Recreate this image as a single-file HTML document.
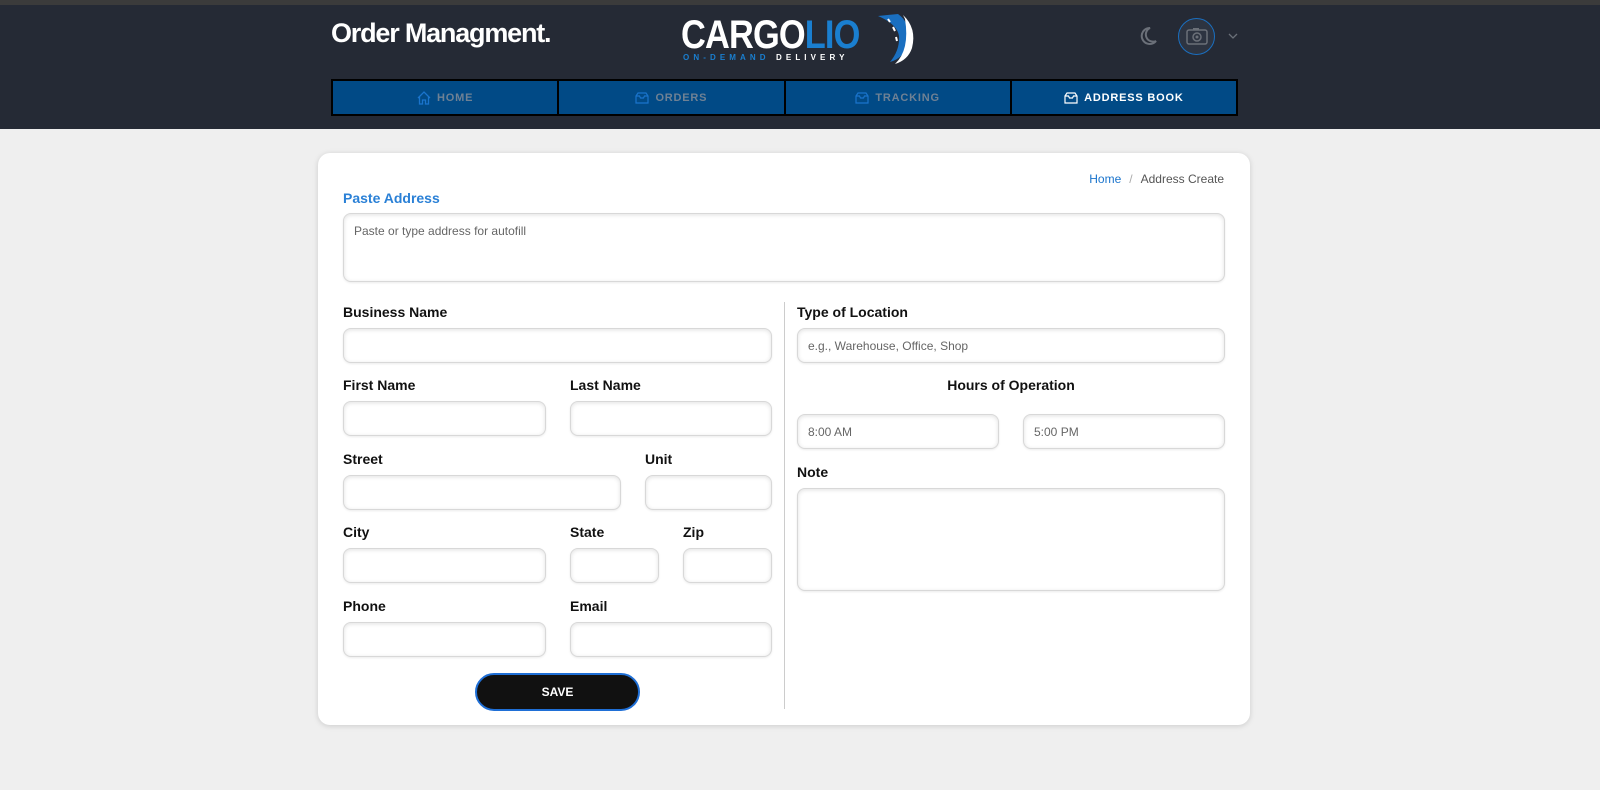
<!DOCTYPE html>
<html><head><meta charset="utf-8"><style>
*{box-sizing:border-box;margin:0;padding:0}
body{width:1600px;height:790px;background:#efefef;font-family:"Liberation Sans",Arial,sans-serif;position:relative;overflow:hidden}
.a{position:absolute}
.top{left:0;top:0;width:1600px;height:5px;background:#3b3b3b}
.hdr{left:0;top:5px;width:1600px;height:124px;background:#252a35}
.title{left:331px;top:18px;color:#fff;font-size:27px;font-weight:bold;letter-spacing:-1.2px}
.nav{left:331px;top:79px;width:907px;height:37px;background:#000;display:flex;gap:2px;padding:2px}
.nav div{flex:1;background:#014a86;color:#6f8194;font-size:11px;font-weight:bold;letter-spacing:.8px;display:flex;align-items:center;justify-content:center;gap:6px}
.nav div.act{color:#fff}
.card{left:318px;top:153px;width:932px;height:572px;background:#fff;border-radius:12px;box-shadow:0 1px 6px rgba(0,0,0,.15)}
.lbl{font-size:14px;font-weight:bold;color:#111}
.in{border:1px solid #d8d8d8;border-radius:8px;background:#fff;box-shadow:inset 0 1px 4px rgba(0,0,0,.12),0 1px 2px rgba(0,0,0,.08);font-size:12px;color:#666;padding:0 10px;display:flex;align-items:center}
</style></head><body>
<div class="a top"></div>
<div class="a hdr"></div>
<div class="a title">Order Managment.</div>
<div class="a" style="left:681px;top:13px;color:#fff;font-size:40px;font-weight:bold;letter-spacing:-1px;line-height:44px;transform:scaleX(0.86);transform-origin:0 0;white-space:nowrap">CARGO<span style="color:#1a7fd0">LIO</span></div>
<div class="a" style="left:683px;top:53px;font-size:8px;font-weight:bold;letter-spacing:4.1px;color:#1a7fd0;white-space:nowrap">ON-DEMAND <span style="color:#fff">DELIVERY</span></div>
<svg class="a" style="left:870px;top:10px" width="50" height="55" viewBox="0 0 50 55"><path d="M8 6 L28 4 Q42 14 38 34 Q34 48 20 52 Q30 40 29 26 Q27 14 8 6Z" fill="#1a6fc0"/><path d="M33 5 Q47 18 42 38 Q38 50 25 54 Q40 40 35 9Z" fill="#fff"/><path d="M18 9 L20 12 M23 17 L25 21 M26 27 L27 31" stroke="#fff" stroke-width="2"/></svg>
<svg class="a" style="left:1138px;top:26px" width="20" height="20" viewBox="0 0 20 20"><path d="M12 2 A8 8 0 1 0 18 15 A7 7 0 0 1 12 2Z" fill="none" stroke="#6b7079" stroke-width="2"/></svg>
<div class="a" style="left:1178px;top:18px;width:37px;height:37px;border-radius:50%;border:1.5px solid #1a6fc0;background:#2d3441"></div>
<svg class="a" style="left:1186px;top:27px" width="22" height="18" viewBox="0 0 22 18"><rect x="1" y="3" width="20" height="14" rx="2" fill="none" stroke="#6b7079" stroke-width="1.5"/><circle cx="11" cy="10" r="4" fill="none" stroke="#6b7079" stroke-width="1.5"/><circle cx="11" cy="10" r="1.5" fill="#6b7079"/><rect x="7" y="1" width="6" height="2" fill="#6b7079"/></svg>
<svg class="a" style="left:1228px;top:33px" width="10" height="6"><path d="M1 1 L5 5 L9 1" stroke="#6b7079" fill="none" stroke-width="1.3"/></svg>
<div class="a nav">
<div><svg width="14" height="14" viewBox="0 0 14 14"><path d="M1 7 L7 1 L13 7 M2.5 5.5 V13 H5.5 V9 H8.5 V13 H11.5 V5.5" fill="none" stroke="#1a74cc" stroke-width="1.3"/></svg>HOME</div>
<div><svg width="14" height="12" viewBox="0 0 14 12"><path d="M1 4 L3 1 H11 L13 4 V11 H1Z M1 4 H4.5 L5.5 6 H8.5 L9.5 4 H13" fill="none" stroke="#1a74cc" stroke-width="1.2"/></svg>ORDERS</div>
<div><svg width="14" height="12" viewBox="0 0 14 12"><path d="M1 4 L3 1 H11 L13 4 V11 H1Z M1 4 H4.5 L5.5 6 H8.5 L9.5 4 H13" fill="none" stroke="#1a74cc" stroke-width="1.2"/></svg>TRACKING</div>
<div class="act"><svg width="14" height="12" viewBox="0 0 14 12"><path d="M1 4 L3 1 H11 L13 4 V11 H1Z M1 4 H4.5 L5.5 6 H8.5 L9.5 4 H13" fill="none" stroke="#fff" stroke-width="1.2"/></svg>ADDRESS BOOK</div>
</div>
<div class="a card"></div>
<div class="a" style="right:376px;top:172px;font-size:12px;color:#555"><span style="color:#1a74cc">Home</span><span style="color:#aaa;margin:0 8px">/</span>Address Create</div>
<div class="a" style="left:343px;top:190px;font-size:14px;font-weight:bold;color:#2a80d6">Paste Address</div>
<div class="a in" style="left:343px;top:213px;width:882px;height:69px;align-items:flex-start;padding-top:10px">Paste or type address for autofill</div>
<div class="a" style="left:784px;top:302px;width:1px;height:407px;background:#ccc"></div>
<div class="a lbl" style="left:343px;top:304px">Business Name</div>
<div class="a in" style="left:343px;top:328px;width:429px;height:35px"></div>
<div class="a lbl" style="left:343px;top:377px">First Name</div>
<div class="a lbl" style="left:570px;top:377px">Last Name</div>
<div class="a in" style="left:343px;top:401px;width:203px;height:35px"></div>
<div class="a in" style="left:570px;top:401px;width:202px;height:35px"></div>
<div class="a lbl" style="left:343px;top:451px">Street</div>
<div class="a lbl" style="left:645px;top:451px">Unit</div>
<div class="a in" style="left:343px;top:475px;width:278px;height:35px"></div>
<div class="a in" style="left:645px;top:475px;width:127px;height:35px"></div>
<div class="a lbl" style="left:343px;top:524px">City</div>
<div class="a lbl" style="left:570px;top:524px">State</div>
<div class="a lbl" style="left:683px;top:524px">Zip</div>
<div class="a in" style="left:343px;top:548px;width:203px;height:35px"></div>
<div class="a in" style="left:570px;top:548px;width:89px;height:35px"></div>
<div class="a in" style="left:683px;top:548px;width:89px;height:35px"></div>
<div class="a lbl" style="left:343px;top:598px">Phone</div>
<div class="a lbl" style="left:570px;top:598px">Email</div>
<div class="a in" style="left:343px;top:622px;width:203px;height:35px"></div>
<div class="a in" style="left:570px;top:622px;width:202px;height:35px"></div>
<div class="a" style="left:475px;top:673px;width:165px;height:38px;border-radius:19px;background:#111;border:2px solid #1f6fd6;color:#fff;font-size:12px;font-weight:bold;display:flex;align-items:center;justify-content:center">SAVE</div>
<div class="a lbl" style="left:797px;top:304px">Type of Location</div>
<div class="a in" style="left:797px;top:328px;width:428px;height:35px">e.g., Warehouse, Office, Shop</div>
<div class="a lbl" style="left:797px;top:377px;width:428px;text-align:center">Hours of Operation</div>
<div class="a in" style="left:797px;top:414px;width:202px;height:35px">8:00 AM</div>
<div class="a in" style="left:1023px;top:414px;width:202px;height:35px">5:00 PM</div>
<div class="a lbl" style="left:797px;top:464px">Note</div>
<div class="a in" style="left:797px;top:488px;width:428px;height:103px"></div>
</body></html>
